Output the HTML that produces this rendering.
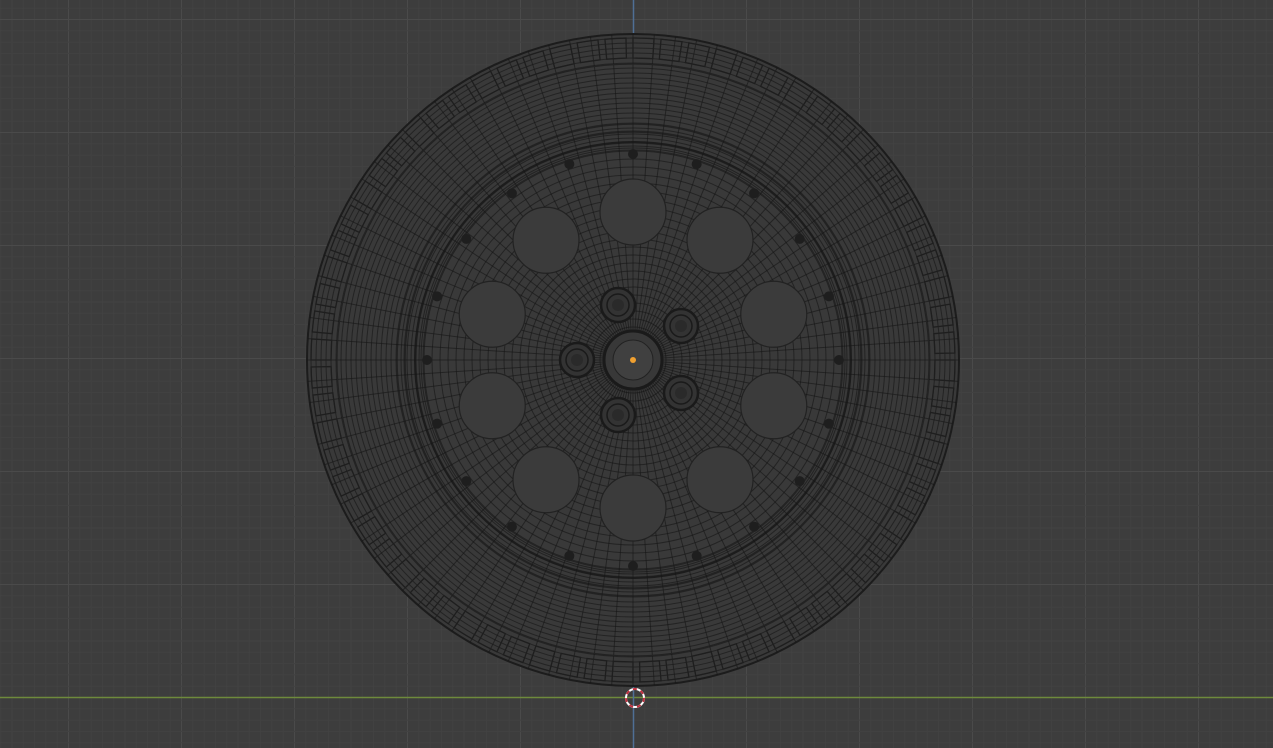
<!DOCTYPE html>
<html><head><meta charset="utf-8"><style>
html,body{margin:0;padding:0;background:#3d3d3d;overflow:hidden}
svg{display:block}
</style></head><body>
<svg id="s" width="1273" height="748" viewBox="0 0 1273 748" xmlns="http://www.w3.org/2000/svg">
<rect width="1273" height="748" fill="#3d3d3d"/>
<g id="grid"></g>
<line x1="0" y1="697.5" x2="1273" y2="697.5" stroke="#6e8a3c" stroke-width="1.5"/>
<line x1="633.5" y1="0" x2="633.5" y2="748" stroke="#4f6f95" stroke-width="1.5"/>
<g id="w"></g>
</svg>
<script>
var NS="http://www.w3.org/2000/svg";
function el(p,t,a){var e=document.createElementNS(NS,t);for(var k in a)e.setAttribute(k,a[k]);p.appendChild(e);return e;}
var g=document.getElementById('grid');
for(var i=-60;i<=60;i++){var x=633.5+i*11.3;if(x<0||x>1273)continue;el(g,'line',{x1:x,y1:0,x2:x,y2:748,stroke:(i%10==0)?'#4a4a4a':'#424242','stroke-width':1});}
for(var i=-70;i<=10;i++){var y=697.5+i*11.3;if(y<0||y>748)continue;el(g,'line',{x1:0,y1:y,x2:1273,y2:y,stroke:(i%10==0)?'#4a4a4a':'#424242','stroke-width':1});}
var w=document.getElementById('w');var cx=633,cy=360;
el(w,'circle',{cx:cx,cy:cy,r:326,fill:'#393939'});
var L='rgba(22,22,22,0.6)';
var rings=[];
for(var r=232;r<=326;r+=5)rings.push(r);
for(var r=25;r<=220;r+=8)rings.push(r);
rings.push(210,212,214,222,226,229);
rings.forEach(function(r){el(w,'circle',{cx:cx,cy:cy,r:r,fill:'none',stroke:L,'stroke-width':1});});
el(w,'circle',{cx:cx,cy:cy,r:326,fill:'none',stroke:'#1c1c1c','stroke-width':2});
el(w,'circle',{cx:cx,cy:cy,r:218,fill:'none',stroke:'#1c1c1c','stroke-width':2});
el(w,'circle',{cx:cx,cy:cy,r:228,fill:'none',stroke:'#222','stroke-width':1.5});
el(w,'circle',{cx:cx,cy:cy,r:236,fill:'none',stroke:'#222','stroke-width':1.5});
for(var i=0;i<96;i++){var a=i*Math.PI*2/96;el(w,'line',{x1:cx+28*Math.cos(a),y1:cy+28*Math.sin(a),x2:cx+326*Math.cos(a),y2:cy+326*Math.sin(a),stroke:L,'stroke-width':1});}
// tread blocks
for(var i=0;i<72;i++){var a=i*Math.PI*2/72;var a2=a+Math.PI*2/72*0.75;
var r1=302,r2=322;
var d='M'+(cx+r1*Math.cos(a))+' '+(cy+r1*Math.sin(a))+' L'+(cx+r2*Math.cos(a))+' '+(cy+r2*Math.sin(a))+' A'+r2+' '+r2+' 0 0 1 '+(cx+r2*Math.cos(a2))+' '+(cy+r2*Math.sin(a2))+' L'+(cx+r1*Math.cos(a2))+' '+(cy+r1*Math.sin(a2))+' Z';
el(w,'path',{d:d,fill:'none',stroke:'#1e1e1e','stroke-width':1.3});}
el(w,'circle',{cx:cx,cy:cy,r:296,fill:'none',stroke:'#222','stroke-width':1.2});
for(var i=0;i<10;i++){var a=-Math.PI/2+i*Math.PI/5;el(w,'circle',{cx:cx+148*Math.cos(a),cy:cy+148*Math.sin(a),r:33,fill:'#3b3b3b',stroke:'#222','stroke-width':1.2});}
for(var i=0;i<20;i++){var a=-Math.PI/2+i*Math.PI/10;el(w,'circle',{cx:cx+206*Math.cos(a),cy:cy+206*Math.sin(a),r:5,fill:'#1e1e1e'});}
[[618,305],[681,326],[577,360],[681,393],[618,415]].forEach(function(p){
el(w,'circle',{cx:p[0],cy:p[1],r:17,fill:'#333',stroke:'#1a1a1a','stroke-width':2.5});
el(w,'circle',{cx:p[0],cy:p[1],r:11,fill:'none',stroke:'#1a1a1a','stroke-width':1.5});
el(w,'circle',{cx:p[0],cy:p[1],r:6,fill:'#2a2a2a'});});
el(w,'circle',{cx:cx,cy:cy,r:29,fill:'#383838',stroke:'#1a1a1a','stroke-width':3});
el(w,'circle',{cx:cx,cy:cy,r:20,fill:'#404040',stroke:'#222','stroke-width':1});
el(w,'circle',{cx:cx,cy:cy,r:3,fill:'#f0a030'});
el(document.getElementById('s'),'circle',{cx:635,cy:698,r:9,fill:'none',stroke:'#fff','stroke-width':2});
el(document.getElementById('s'),'circle',{cx:635,cy:698,r:9,fill:'none',stroke:'#c03040','stroke-width':2,'stroke-dasharray':'4 4'});
</script>
</body></html>
